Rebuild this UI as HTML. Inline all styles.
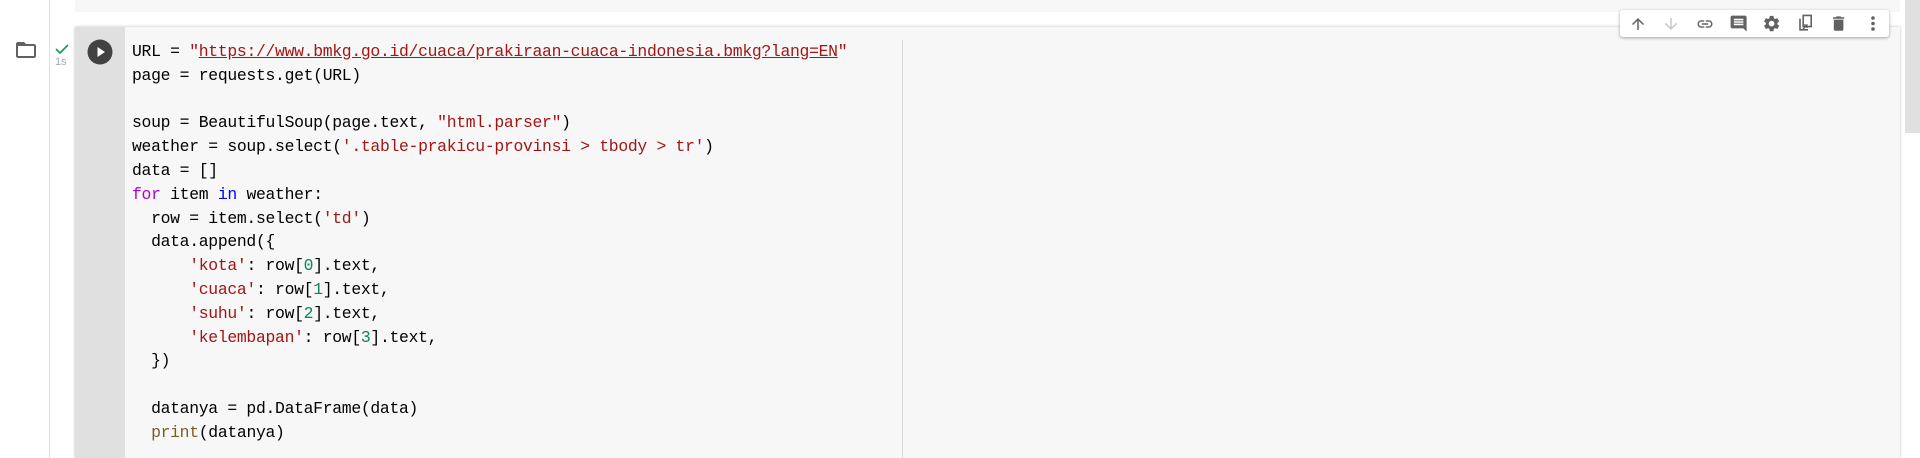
<!DOCTYPE html>
<html><head><meta charset="utf-8"><style>
html,body{margin:0;padding:0;width:1920px;height:458px;overflow:hidden;background:#fff;position:relative;font-family:"Liberation Sans",sans-serif}
.abs{position:absolute}
pre{margin:0;font-family:"Liberation Mono",monospace;font-size:16.4px;line-height:23.8px;color:#000;letter-spacing:-0.3px}
.s{color:#a31515}.k{color:#af00db}.b{color:#0000ff}.n{color:#098658}.f{color:#795e26}
.u{text-decoration:underline;text-decoration-color:#a31515}
</style></head><body>
<div class="abs" style="left:49px;top:0;width:1px;height:458px;background:#e0e0e0"></div>
<div class="abs" style="left:75px;top:0;width:1825px;height:12px;background:#f7f7f7"></div>
<div class="abs" style="left:75px;top:27px;width:1825px;height:431px;background:#f7f7f7;box-shadow:0 0 3px rgba(0,0,0,.25)"></div>
<div class="abs" style="left:75px;top:27px;width:50px;height:431px;background:#e0e0e0"></div>
<div class="abs" style="left:902px;top:40px;width:1px;height:418px;background:#d8d8d8"></div>
<div class="abs" style="left:1905px;top:0;width:15px;height:133px;background:#e0e0e0"></div>
<svg class="abs" style="left:13px;top:38px" width="26" height="24" viewBox="0 0 24 24"><path d="M10 4H4c-1.1 0-2 .9-2 2v12c0 1.1.9 2 2 2h16c1.1 0 2-.9 2-2V8c0-1.1-.9-2-2-2h-8l-2-2zm10 14H4V8h16v10z" fill="#616161"/></svg>
<svg class="abs" style="left:55px;top:43px" width="14" height="12" viewBox="0 0 14 12"><path d="M1 6l4 4 8-8" stroke="#0f9d58" stroke-width="1.6" fill="none"/></svg>
<div class="abs" style="left:55px;top:56px;font-size:11px;color:#aaa">1s</div>
<svg class="abs" style="left:87px;top:39px" width="26" height="26" viewBox="0 0 26 26"><circle cx="13" cy="13" r="12.5" fill="#424242"/><path d="M10.5 8v10l7.5-5z" fill="#fff"/></svg>
<pre class="abs" style="left:132px;top:40px">URL = <span class="s">"<span class="u">https://www.bmkg.go.id/cuaca/prakiraan-cuaca-indonesia.bmkg?lang=EN</span>"</span>
page = requests.get(URL)

soup = BeautifulSoup(page.text, <span class="s">"html.parser"</span>)
weather = soup.select(<span class="s">'.table-prakicu-provinsi &gt; tbody &gt; tr'</span>)
data = []
<span class="k">for</span> item <span class="b">in</span> weather:
  row = item.select(<span class="s">'td'</span>)
  data.append({
      <span class="s">'kota'</span>: row[<span class="n">0</span>].text,
      <span class="s">'cuaca'</span>: row[<span class="n">1</span>].text,
      <span class="s">'suhu'</span>: row[<span class="n">2</span>].text,
      <span class="s">'kelembapan'</span>: row[<span class="n">3</span>].text,
  })

  datanya = pd.DataFrame(data)
  <span class="f">print</span>(datanya)</pre>
<div class="abs" style="left:1620px;top:10px;width:269px;height:27px;background:#fff;border-radius:3px;box-shadow:0 1px 3px rgba(0,0,0,.35)"></div>
<svg class="abs" style="left:1620px;top:10px" width="270" height="27" viewBox="0 0 270 27">
<g transform="translate(9,5)"><path d="M4 12l1.4 1.4L11 7.8V20h2V7.8l5.6 5.6L20 12l-8-8z" fill="#616161" transform="scale(.75)"/></g>
<g transform="translate(42,5)"><path d="M20 12l-1.4-1.4L13 16.2V4h-2v12.2l-5.6-5.6L4 12l8 8z" fill="#c8c8c8" transform="scale(.75)"/></g>
<g transform="translate(76,5)"><path d="M3.9 12c0-1.7 1.4-3.1 3.1-3.1h4V7H7c-2.8 0-5 2.2-5 5s2.2 5 5 5h4v-1.9H7c-1.7 0-3.1-1.4-3.1-3.1zM8 13h8v-2H8v2zm9-6h-4v1.9h4c1.7 0 3.1 1.4 3.1 3.1s-1.4 3.1-3.1 3.1h-4V17h4c2.8 0 5-2.2 5-5s-2.2-5-5-5z" fill="#616161" transform="scale(.75)"/></g>
<g transform="translate(109,4)"><path d="M21.99 4c0-1.1-.89-2-1.99-2H4c-1.1 0-2 .9-2 2v12c0 1.1.9 2 2 2h14l4 4-.01-18zM18 14H6v-2h12v2zm0-3H6V9h12v2zm0-3H6V6h12v2z" fill="#616161" transform="scale(.8)"/></g>
<g transform="translate(142,4)"><path d="M19.14 12.94c.04-.3.06-.61.06-.94 0-.32-.02-.64-.07-.94l2.03-1.58a.49.49 0 0 0 .12-.61l-1.92-3.32a.49.49 0 0 0-.59-.22l-2.39.96c-.5-.38-1.03-.7-1.62-.94l-.36-2.54a.48.48 0 0 0-.48-.41h-3.840c-.24 0-.43.17-.47.41l-.36 2.54c-.59.24-1.13.57-1.62.94l-2.39-.96a.48.48 0 0 0-.59.22L2.74 8.87c-.12.21-.08.47.12.61l2.03 1.58c-.05.3-.09.63-.09.94s.02.64.07.94l-2.03 1.58a.49.49 0 0 0-.12.61l1.920 3.32c.12.22.37.29.59.22l2.39-.96c.5.38 1.03.7 1.62.94l.36 2.54c.05.24.24.41.48.41h3.84c.24 0 .44-.17.47-.41l.36-2.54c.59-.24 1.13-.56 1.62-.94l2.39.96c.22.08.47 0 .59-.22l1.92-3.32c.12-.22.07-.47-.12-.61l-2.01-1.58zM12 15.6A3.6 3.6 0 1 1 12 8.4a3.6 3.6 0 0 1 0 7.2z" fill="#616161" transform="scale(.8)"/></g>
<g transform="translate(176,3)"><path d="M9 3h10v14H9z M5 7v14h10" stroke="#616161" stroke-width="2" fill="none" transform="scale(.8)"/><path d="M7 16l4-4M8 12h3v3" stroke="#616161" stroke-width="1.3" fill="none"/></g>
<g transform="translate(209,4)"><path d="M6 19c0 1.1.9 2 2 2h8c1.1 0 2-.9 2-2V7H6v12zM19 4h-3.5l-1-1h-5l-1 1H5v2h14V4z" fill="#616161" transform="scale(.8)"/></g>
<g transform="translate(244,4)"><circle cx="9" cy="4" r="1.8" fill="#616161"/><circle cx="9" cy="9.5" r="1.8" fill="#616161"/><circle cx="9" cy="15" r="1.8" fill="#616161"/></g>
</svg>
</body></html>
